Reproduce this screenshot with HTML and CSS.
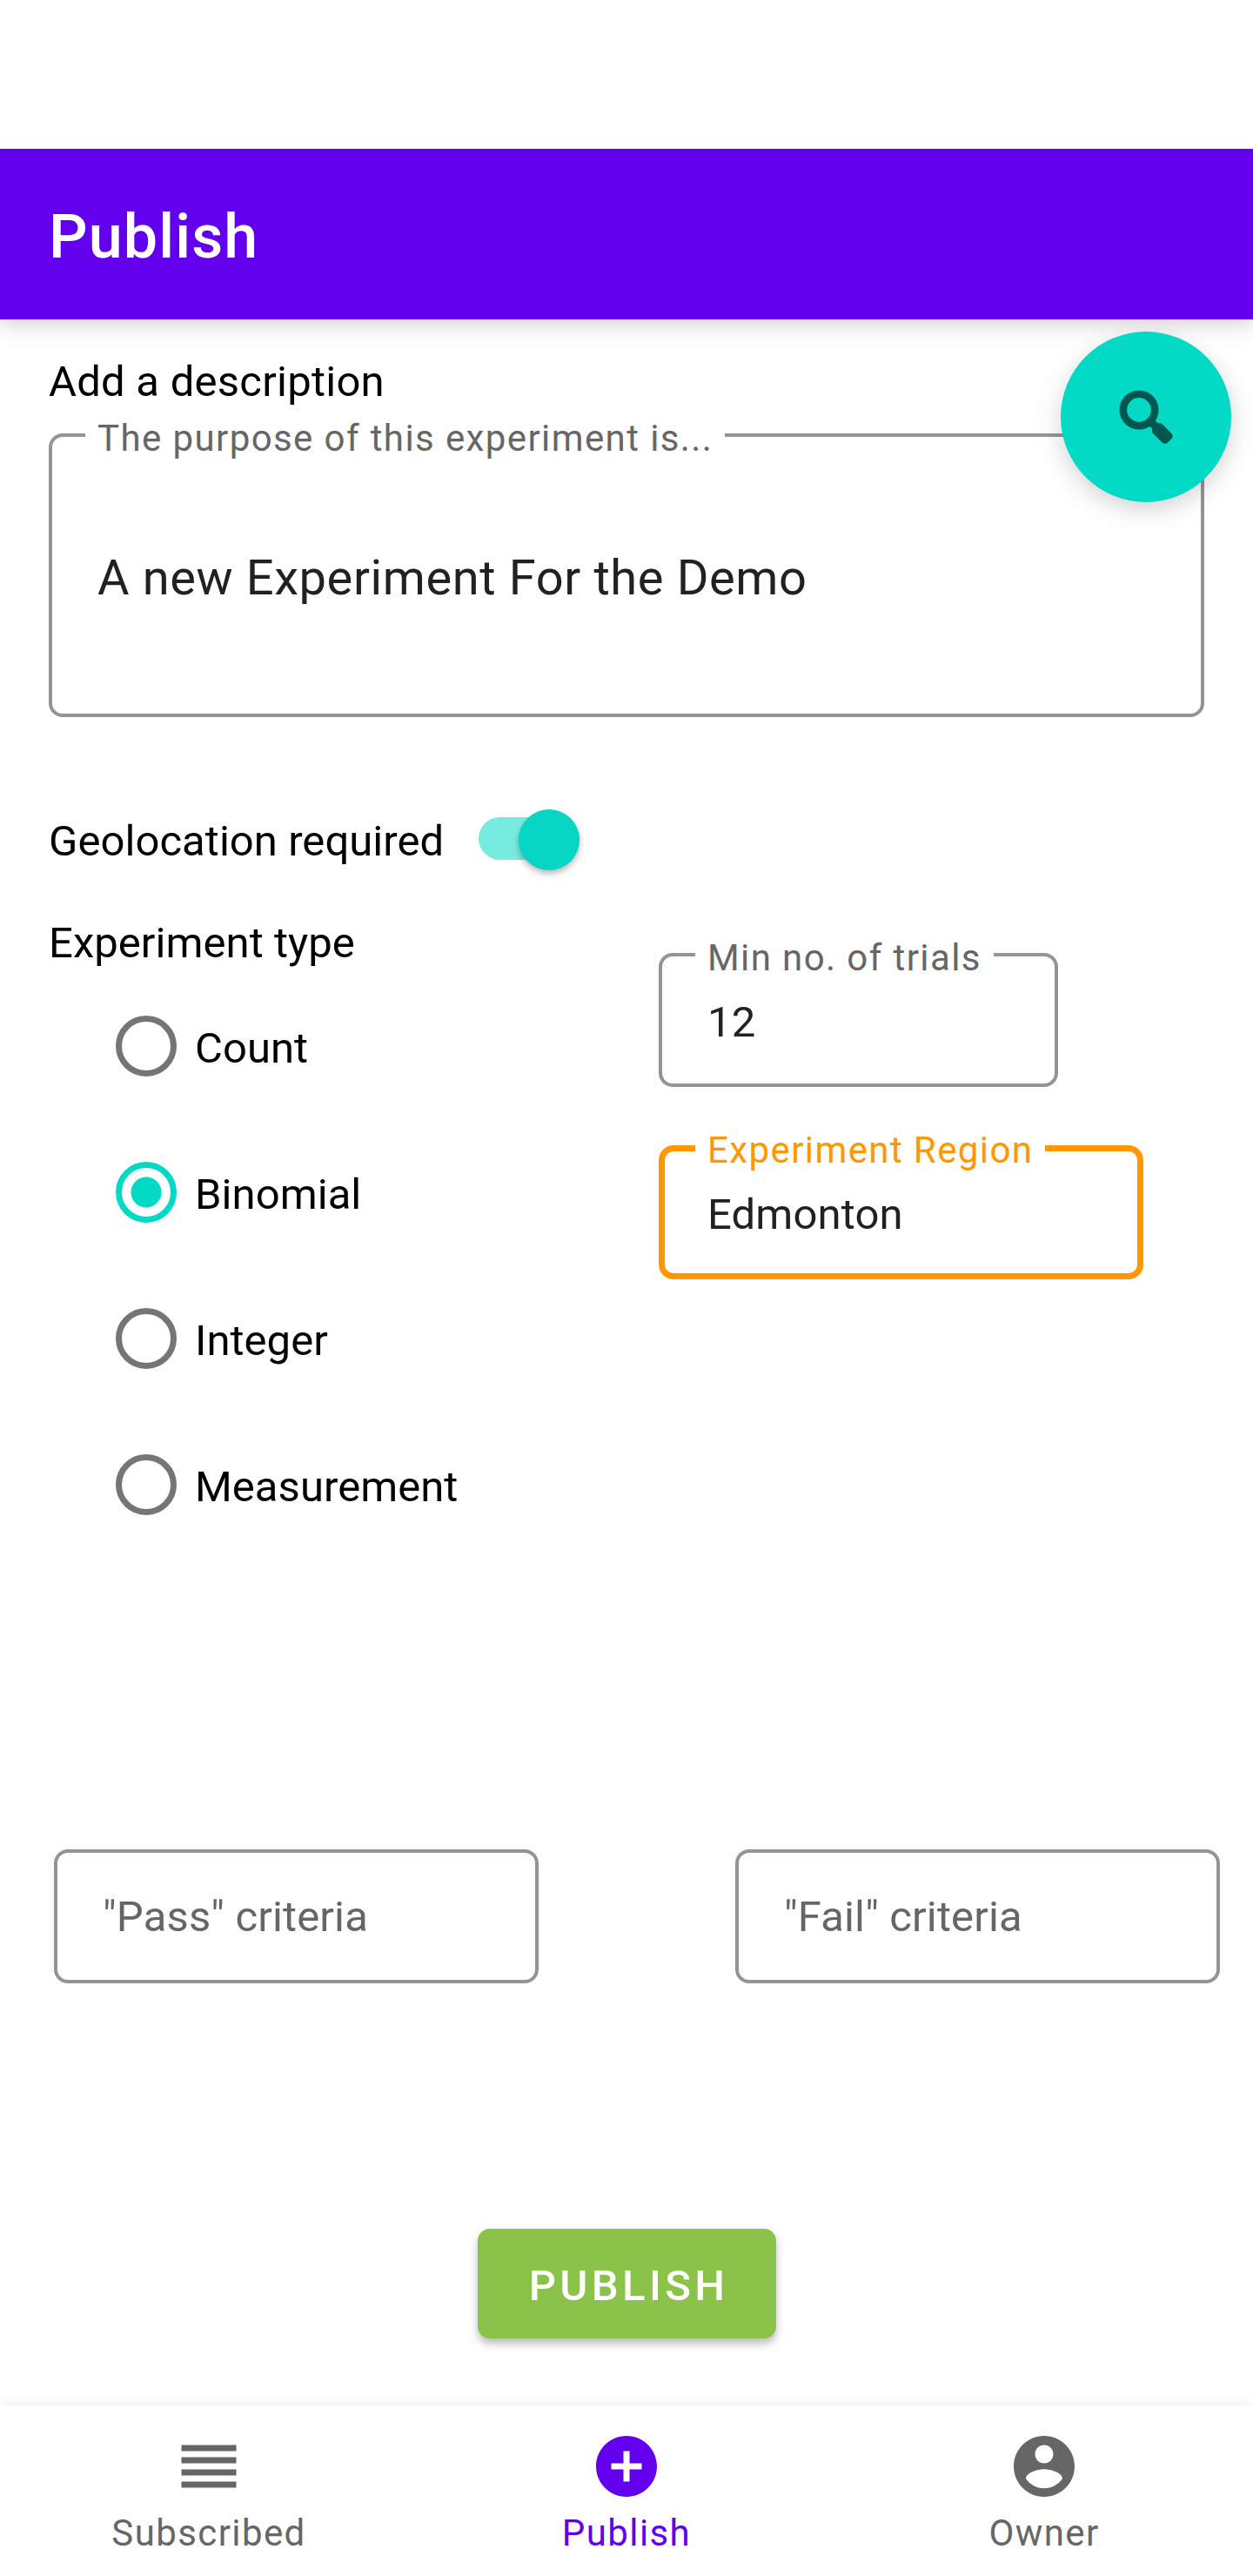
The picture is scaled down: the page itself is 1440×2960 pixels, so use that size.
FILE: index.html
```html
<!DOCTYPE html>
<html lang="en">
<head>
<meta charset="utf-8">
<title>Publish</title>
<link rel="stylesheet" href="styles.css">
</head>
<body>
<div class="screen">
  <header class="app-bar"><h1 class="app-title">Publish</h1></header>

  <main class="content">
    <button class="fab" aria-label="Search">
      <svg class="fab-icon" viewBox="0 0 96 96">
        <circle cx="39" cy="41" r="18.2" fill="none" stroke="currentColor" stroke-width="8.6"/>
        <path d="M51 53l7 7" stroke="currentColor" stroke-width="9"/>
        <rect x="54" y="60.5" width="23.6" height="15" rx="4.5" fill="currentColor" transform="rotate(45 65.7 68)"/>
      </svg>
    </button>

    <p class="text text-description">Add a description</p>
    <div class="field field-description">
      <span class="field-label">The purpose of this experiment is...</span>
      <span class="field-value field-value-large">A new Experiment For the Demo</span>
    </div>

    <div class="geo-row">
      <span class="text geo-text">Geolocation required</span>
      <span class="switch"><span class="switch-thumb"></span></span>
    </div>

    <section class="experiment">
      <div class="type-column">
        <p class="text">Experiment type</p>
        <div class="radio-group">
          <div class="radio-row"><span class="radio"></span><span class="text radio-text">Count</span></div>
          <div class="radio-row"><span class="radio radio-on"></span><span class="text radio-text">Binomial</span></div>
          <div class="radio-row"><span class="radio"></span><span class="text radio-text">Integer</span></div>
          <div class="radio-row"><span class="radio"></span><span class="text radio-text">Measurement</span></div>
        </div>
      </div>
      <div class="detail-column">
        <div class="field field-trials">
          <span class="field-label">Min no. of trials</span>
          <span class="field-value">12</span>
        </div>
        <div class="field field-region">
          <span class="field-label">Experiment Region</span>
          <span class="field-value">Edmonton</span>
        </div>
      </div>
    </section>

    <section class="criteria">
      <div class="field field-criteria"><span class="field-value">"Pass" criteria</span></div>
      <div class="field field-criteria"><span class="field-value">"Fail" criteria</span></div>
    </section>

    <button class="publish-button">PUBLISH</button>
  </main>

  <nav class="bottom-nav">
    <a class="nav-item">
      <svg class="nav-icon" viewBox="0 0 24 24"><path d="M3 15h18v-2H3v2zm0 4h18v-2H3v2zm0-8h18V9H3v2zm0-6v2h18V5H3z"/></svg>
      <span>Subscribed</span>
    </a>
    <a class="nav-item nav-item-active">
      <svg class="nav-icon" viewBox="0 0 24 24"><path d="M12 2C6.48 2 2 6.48 2 12s4.48 10 10 10 10-4.48 10-10S17.52 2 12 2zm5 11h-4v4h-2v-4H7v-2h4V7h2v4h4v2z"/></svg>
      <span>Publish</span>
    </a>
    <a class="nav-item">
      <svg class="nav-icon" viewBox="0 0 24 24"><path d="M12 2C6.48 2 2 6.48 2 12s4.48 10 10 10 10-4.48 10-10S17.52 2 12 2zm0 3c1.66 0 3 1.34 3 3s-1.34 3-3 3-3-1.34-3-3 1.34-3 3-3zm0 14.2c-2.5 0-4.71-1.28-6-3.22.03-1.99 4-3.08 6-3.08 1.99 0 5.97 1.09 6 3.08-1.29 1.94-3.5 3.22-6 3.22z"/></svg>
      <span>Owner</span>
    </a>
  </nav>
</div>
</body>
</html>
```
FILE: styles.css
```css
* {
  box-sizing: border-box;
}

body {
  margin: 0;
  background: #fefefe;
  font-family: Roboto, "Liberation Sans", sans-serif;
  color: #000;
}

.screen {
  display: flex;
  flex-direction: column;
  width: 1440px;
  height: 2960px;
  padding-top: 171px;
  overflow: hidden;
}

.app-bar {
  display: flex;
  flex: none;
  align-items: center;
  height: 196px;
  padding: 6px 56px 0;
  background: #6200ee;
  box-shadow: 0 4px 22px rgba(0, 0, 0, 0.2);
  clip-path: inset(0 0 -30px 0);
}

.app-title {
  margin: 0;
  color: #fff;
  font-size: 70px;
  font-weight: 500;
  line-height: 82px;
  letter-spacing: 0.016em;
}

.content {
  position: relative;
  display: flex;
  flex: 1;
  flex-direction: column;
  padding: 43px 56px 0;
}

.text {
  margin: 0;
  font-size: 49px;
  line-height: 57px;
  letter-spacing: 0.001em;
  white-space: nowrap;
}

.text-description {
  letter-spacing: 0.005em;
}

.fab {
  position: absolute;
  z-index: 2;
  top: 14px;
  right: 25px;
  display: flex;
  align-items: center;
  justify-content: center;
  width: 196px;
  height: 196px;
  padding: 0;
  border: 0;
  border-radius: 50%;
  background: #03dac5;
  color: #01574f;
  box-shadow: 0 8px 24px rgba(0, 0, 0, 0.17);
}

.fab-icon {
  width: 96px;
  height: 96px;
  transform: translate(1px, -1px);
}

/* Outlined text fields */
.field {
  position: relative;
  display: flex;
  align-items: flex-start;
  border: 4px solid #949494;
  border-radius: 16px;
  padding-left: 52px;
  white-space: nowrap;
}

.field-label {
  position: absolute;
  top: -23px;
  left: 38px;
  padding: 0 14px;
  background: #fefefe;
  color: #666;
  font-size: 42px;
  line-height: 49px;
  letter-spacing: 0.0333333em;
}

.field-value {
  color: #212121;
  font-size: 49px;
  line-height: 57px;
  letter-spacing: 0.003em;
}

.field-value-large {
  font-size: 56px;
  line-height: 66px;
  letter-spacing: 0.011em;
}

.field-description {
  height: 326px;
  margin-top: 31px;
  padding-top: 129px;
}

.field-trials {
  width: 459px;
  height: 154px;
  padding-top: 47px;
}

.field-region {
  width: 557px;
  height: 154px;
  margin-top: 67px;
  padding-top: 44px;
  padding-left: 49px;
  border: 7px solid #ff9800;
  border-radius: 17px;
}

.field-region .field-label {
  top: -26px;
  left: 35px;
  color: #ff9800;
}

.geo-row {
  display: flex;
  height: 70px;
  margin-top: 106px;
}

.geo-text {
  width: 494px;
  padding-top: 8px;
}

.switch {
  display: flex;
  align-items: center;
  justify-content: flex-end;
  width: 116px;
  height: 49px;
  margin-top: 9px;
  border-radius: 25px;
  background: #78ebe0;
}

.switch-thumb {
  flex: none;
  width: 70px;
  height: 70px;
  margin-top: 3px;
  border-radius: 50%;
  background: #06d6c3;
  box-shadow: 0 4px 7px rgba(0, 0, 0, 0.28);
}

.experiment {
  display: grid;
  grid-template-columns: 701px 1fr;
  height: 741px;
}

.type-column {
  padding-top: 55px;
}

.detail-column {
  padding-top: 95px;
}

.radio-group {
  display: flex;
  flex-direction: column;
  gap: 98px;
  margin-top: 55px;
  padding-left: 77px;
}

.radio-row {
  display: flex;
  gap: 21px;
  height: 70px;
}

.radio {
  width: 70px;
  height: 70px;
  border: 7px solid #757575;
  border-radius: 50%;
}

.radio-on {
  border-color: #03dac5;
  background: radial-gradient(circle, #03dac5 17px, transparent 18px);
}

.radio-text {
  padding-top: 9px;
}

.criteria {
  display: flex;
  gap: 226px;
  margin: 384px -18px 0 6px;
}

.field-criteria {
  width: 557px;
  height: 154px;
  padding-top: 45px;
}

.field-criteria .field-value {
  color: #666;
}

.publish-button {
  width: 343px;
  height: 126px;
  margin: 282px 0 0 493px;
  padding: 4px 0 0 4px;
  border: 0;
  border-radius: 14px;
  background: #8bc34a;
  color: #fff;
  font-family: inherit;
  font-size: 49px;
  font-weight: 500;
  line-height: 57px;
  letter-spacing: 0.0892857em;
  box-shadow: 0 6px 10px rgba(0, 0, 0, 0.26);
}

.bottom-nav {
  display: grid;
  flex: none;
  grid-template-columns: repeat(3, 1fr);
  height: 196px;
  background: #fefefe;
  box-shadow: 0 0 12px rgba(0, 0, 0, 0.08);
}

.nav-item {
  display: flex;
  flex-direction: column;
  align-items: center;
  gap: 10px;
  padding-top: 28px;
  color: #666;
  font-size: 42px;
  line-height: 49px;
  letter-spacing: 0.0333333em;
}

.nav-item-active {
  color: #6200ee;
}

.nav-icon {
  width: 84px;
  height: 84px;
  fill: currentColor;
}
```
